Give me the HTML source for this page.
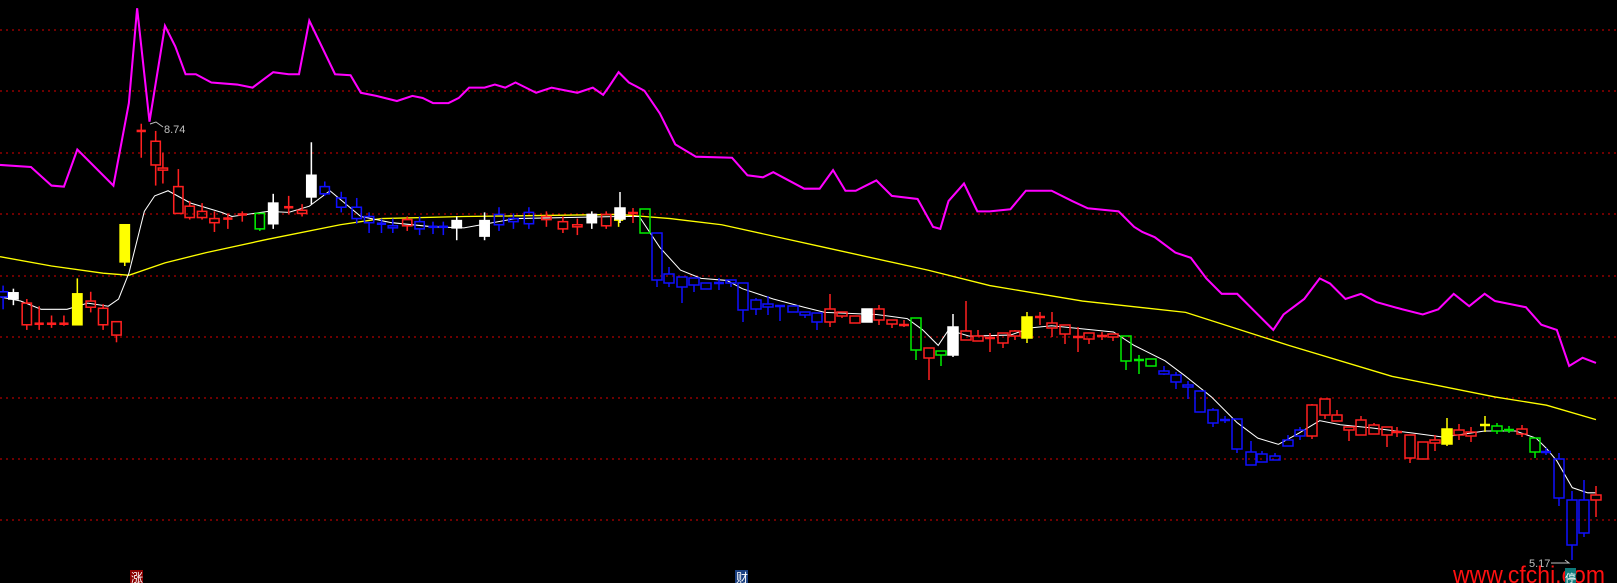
<!DOCTYPE html>
<html><head><meta charset="utf-8"><style>
html,body{margin:0;padding:0;background:#000;overflow:hidden}
svg{display:block}
</style></head><body>
<svg id="s" width="1617" height="583" viewBox="0 0 1617 583" xmlns="http://www.w3.org/2000/svg">
<rect width="1617" height="583" fill="#000"/>
<g stroke="#b00000" stroke-width="1.2" stroke-dasharray="2,4">
<line x1="0" y1="30" x2="1617" y2="30"/><line x1="0" y1="91" x2="1617" y2="91"/>
<line x1="0" y1="153" x2="1617" y2="153"/><line x1="0" y1="214" x2="1617" y2="214"/>
<line x1="0" y1="276" x2="1617" y2="276"/><line x1="0" y1="337" x2="1617" y2="337"/>
<line x1="0" y1="398" x2="1617" y2="398"/><line x1="0" y1="459" x2="1617" y2="459"/>
<line x1="0" y1="520" x2="1617" y2="520"/>
</g>
<g transform="scale(1.031)" fill="none">
<polyline stroke="#ff00ff" stroke-width="2" points="0,160 30,162 50,180 62,181 75,145 110,180 125,100 133,8 145,118 160,25 170,45 180,72 190,72 205,80 230,82 245,85 265,70 280,72 290,72 300,20 325,72 340,73 350,90 365,93 385,98 400,93 410,95 420,100 435,100 445,95 455,85 470,85 480,82 490,85 500,80 510,85 520,90 535,85 550,88 560,90 575,85 585,92 590,85 600,70 610,80 625,88 640,110 655,140 675,152 710,153 725,170 740,172 750,167 765,175 780,183 795,183 808,165 820,185 830,185 840,180 850,175 865,190 890,193 905,220 912,222 920,195 935,178 948,205 960,205 980,203 995,185 1020,185 1040,195 1055,202 1085,205 1100,220 1108,225 1120,230 1140,245 1155,250 1170,270 1185,285 1200,285 1215,300 1235,320 1245,305 1265,290 1280,270 1290,275 1305,290 1320,285 1335,293 1360,300 1380,305 1395,300 1410,285 1425,297 1440,285 1450,292 1465,295 1480,298 1495,315 1510,320 1522,355 1535,347 1548,352"/>
<polyline stroke="#ffff00" stroke-width="1.3" points="0,249 50,258 100,265 125,267 160,255 200,245 260,232 330,218 370,212 450,210 600,208 650,212 700,218 800,240 900,262 960,277 1050,292 1150,303 1250,335 1350,365 1450,385 1500,393 1548,407"/>
<polyline stroke="#ffffff" stroke-width="1" points="0,288 20,292 40,300 65,300 85,294 105,297 115,290 125,265 140,205 150,190 163,185 185,197 215,206 225,210 260,205 280,206 300,200 320,185 350,210 380,216 420,220 450,221 500,212 600,210 620,210 640,240 660,262 680,270 705,272 720,280 750,290 780,298 800,303 850,305 880,309 895,320 910,335 920,320 940,326 980,325 1000,318 1020,316 1080,322 1100,335 1130,350 1150,365 1175,385 1200,410 1220,425 1240,431 1260,420 1280,408 1300,412 1330,415 1370,420 1400,424 1440,418 1470,418 1490,425 1500,435 1510,447 1525,473 1540,478 1548,478"/>
<g id="ga"></g>
</g>
<g id="gb" fill="none"></g>
<g font-family="Liberation Sans, sans-serif" font-size="11" fill="#c0c0c0">
<polyline points="150,124 156,122 163,127" stroke="#c0c0c0" fill="none"/>
<text x="164" y="133">8.74</text>
<text x="1529" y="567">5.17</text>
<polyline points="1551,563 1569,563 1565,560" stroke="#c0c0c0" fill="none"/>
</g>
<rect x="130" y="570" width="13" height="13" fill="#8b0000"/>
<text x="131" y="582" font-family="Noto Sans CJK SC, sans-serif" font-size="12" fill="#fff">涨</text>
<rect x="735" y="570" width="13" height="13" fill="#1a3f80"/>
<text x="736" y="582" font-family="Noto Sans CJK SC, sans-serif" font-size="12" fill="#fff">财</text>
<text x="1453" y="583" font-family="Liberation Sans, sans-serif" font-size="24" fill="#ff1010" textLength="152" lengthAdjust="spacingAndGlyphs">www.cfchi.com</text>
<rect x="1565" y="568" width="11" height="15" fill="#0d7a7a"/>
<text x="1565" y="582" font-family="Noto Sans CJK SC, sans-serif" font-size="11" fill="#fff">停</text>
</svg>
<script>
var NS="http://www.w3.org/2000/svg";
var C={R:"#ff2020",B:"#1010ff",G:"#00ee00",W:"#ffffff",Y:"#ffff00"};
function add(g,x,t,b,h,l,k,w){
 var col=C[k],fill=(k=="W"||k=="Y");
 function el(n,a){var e=document.createElementNS(NS,n);for(var i in a)e.setAttribute(i,a[i]);g.appendChild(e);}
 if(h<t)el("line",{x1:x,y1:h,x2:x,y2:t,stroke:col,"stroke-width":1.5});
 if(l>b)el("line",{x1:x,y1:b,x2:x,y2:l,stroke:col,"stroke-width":1.5});
 if(b-t<2){el("line",{x1:x-w/2,y1:t,x2:x+w/2,y2:t,stroke:col,"stroke-width":2.5});}
 else el("rect",{x:x-w/2,y:t,width:w,height:b-t,stroke:col,"stroke-width":1.5,fill:fill?col:"none"});
}
var A=[[3,283,288,277,300,"B"],[13,284,290,280,296,"W"],[26,294,315,290,320,"R"],[38,314,314,297,320,"R"],[50,314,314,306,318,"R"],[62,314,314,306,316,"R"],[75,285,315,270,315,"Y"],[88,292,298,283,303,"R"],[100,299,315,295,320,"R"],[113,312,325,312,332,"R"],[121,218,254,218,258,"Y"],[137,127,127,120,153,"R"],[151,137,160,127,180,"R"],[158,163,165,148,178,"R"],[173,181,207,164,207,"R"],[184,200,211,195,213,"R"],[196,205,211,197,213,"R"],[208,212,216,205,225,"R"],[221,212,212,207,222,"R"],[235,208,208,205,215,"R"],[252,207,222,207,224,"G"],[265,197,217,188,222,"W"],[280,201,201,190,208,"R"],[293,204,207,198,210,"R"],[302,170,191,138,198,"W"],[315,181,188,176,190,"B"],[331,192,201,186,206,"B"],[346,201,212,192,217,"B"],[358,210,216,206,226,"B"],[370,217,217,212,226,"B"],[381,219,221,212,226,"B"],[395,213,219,210,224,"R"],[407,215,222,210,228,"B"],[420,220,220,215,227,"B"],[430,220,220,215,228,"B"],[443,214,221,210,233,"W"],[470,214,229,206,233,"W"],[484,208,218,201,224,"B"],[498,212,215,207,222,"B"],[513,206,217,201,222,"B"],[530,210,213,205,220,"R"],[546,215,222,210,226,"R"],[560,218,220,212,228,"R"],[574,208,216,205,222,"W"],[588,208,219,205,222,"R"],[600,213,213,211,220,"Y"]];
var B=[[620,208,219,192,223,"W"],[633,213,213,208,223,"R"],[645,209,233,209,233,"G"],[657,233,280,233,287,"B"],[669,274,283,267,287,"B"],[682,277,287,277,303,"B"],[694,278,285,278,292,"B"],[706,283,289,283,289,"B"],[719,283,283,278,290,"B"],[731,280,283,280,287,"B"],[743,283,310,283,322,"B"],[756,300,309,298,315,"B"],[768,304,307,296,315,"B"],[780,306,306,306,321,"B"],[793,306,312,306,312,"B"],[805,312,315,312,318,"B"],[817,313,322,313,330,"B"],[830,309,322,294,327,"R"],[842,312,316,312,318,"R"],[855,316,323,316,323,"R"],[867,309,322,309,322,"W"],[879,309,320,305,325,"R"],[892,320,324,320,328,"R"],[904,325,325,320,327,"R"],[916,318,350,318,360,"G"],[929,348,358,348,380,"R"],[941,351,355,351,366,"G"],[953,327,355,314,357,"W"],[966,331,340,301,340,"R"],[978,336,341,330,341,"R"],[990,338,338,333,352,"R"],[1003,333,343,333,348,"R"],[1015,331,336,330,340,"R"],[1027,317,338,312,343,"Y"],[1040,317,317,312,325,"R"],[1052,323,328,312,337,"R"],[1065,325,334,325,344,"R"],[1078,337,337,327,352,"R"],[1089,333,339,333,344,"R"],[1102,336,336,332,340,"R"],[1113,334,337,334,341,"R"],[1126,336,361,336,370,"G"],[1139,360,360,355,374,"G"],[1151,359,366,359,366,"G"],[1164,371,374,366,375,"B"],[1176,375,382,372,389,"B"],[1188,385,387,381,399,"B"],[1200,391,412,391,412,"B"],[1213,410,423,408,427,"B"],[1225,420,420,416,423,"B"],[1237,419,449,419,453,"B"],[1251,452,465,441,465,"B"],[1262,454,462,451,462,"B"],[1275,456,460,453,460,"B"],[1288,440,446,435,446,"B"],[1300,430,436,427,440,"B"],[1312,405,436,404,439,"R"],[1325,399,415,399,419,"R"],[1337,415,421,410,421,"R"],[1349,427,430,427,441,"R"],[1361,420,435,416,435,"R"],[1374,425,434,423,434,"R"],[1387,427,435,427,447,"R"],[1397,432,432,427,437,"R"],[1410,435,458,435,463,"R"],[1423,442,459,442,459,"R"],[1435,440,443,435,451,"R"],[1447,429,444,418,446,"Y"],[1459,430,435,424,440,"R"],[1471,432,436,427,442,"R"],[1485,425,425,416,432,"Y"],[1497,426,431,423,434,"G"],[1509,430,430,426,433,"G"],[1522,429,434,425,437,"R"],[1535,438,452,438,458,"G"],[1546,452,452,448,455,"B"],[1559,459,498,453,506,"B"],[1572,500,545,491,560,"B"],[1584,500,533,480,537,"B"],[1596,495,500,486,517,"R"]];
var ga=document.getElementById("ga"),gb=document.getElementById("gb");
A.forEach(function(c){add(ga,c[0],c[1],c[2],c[3],c[4],c[5],9);});
B.forEach(function(c){add(gb,c[0],c[1],c[2],c[3],c[4],c[5],10);});
</script>
</body></html>
